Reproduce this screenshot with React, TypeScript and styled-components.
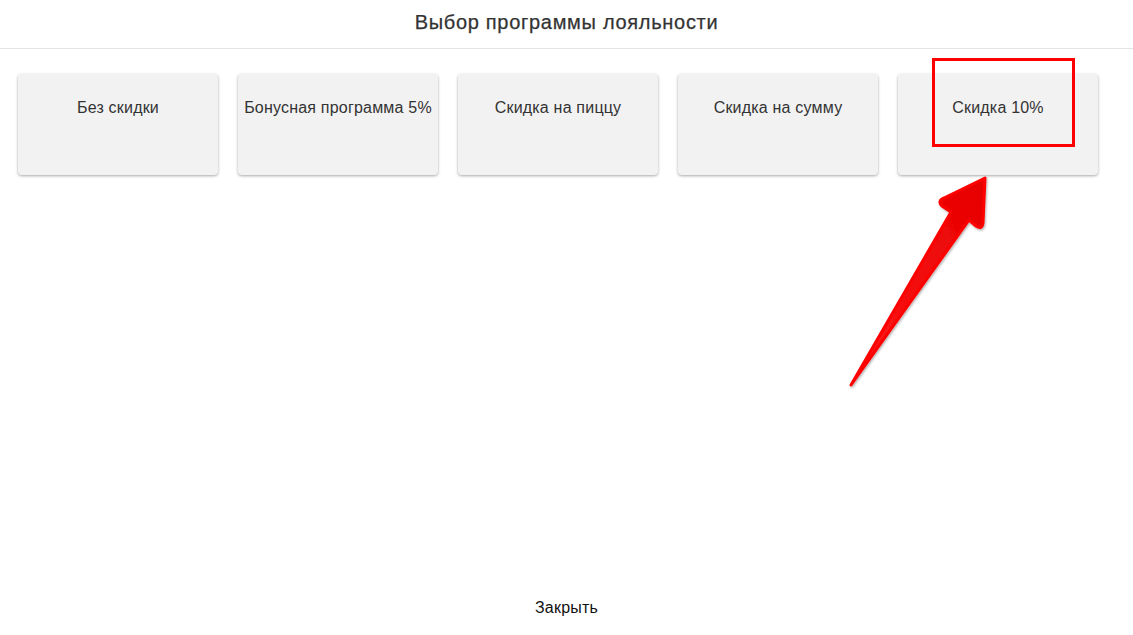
import React from 'react';
import styled, { createGlobalStyle } from 'styled-components';

const GlobalStyle = createGlobalStyle`
  html, body {
    margin: 0;
    padding: 0;
    background: #fff;
    font-family: "Liberation Sans", Arial, sans-serif;
  }
`;

const Page = styled.div`
  position: relative;
  height: 100vh;
  display: flex;
  flex-direction: column;
  overflow: hidden;
`;

const Header = styled.header`
  height: 49px;
  display: flex;
  align-items: center;
  justify-content: center;
  padding-bottom: 4px;
  box-sizing: border-box;
  border-bottom: 1px solid #e3e3e3;
`;

const Title = styled.h1`
  margin: 0;
  font-size: 20px;
  font-weight: 400;
  letter-spacing: 0.7px;
  color: #333;
  -webkit-text-stroke: 0.25px #333;
`;

const Body = styled.main`
  flex: 1;
  padding: 25px 18px 0;
`;

const CardRow = styled.div`
  display: flex;
  gap: 20px;
`;

const Card = styled.button`
  width: 200px;
  height: 101px;
  padding: 25px 0 0;
  box-sizing: border-box;
  display: flex;
  justify-content: center;
  align-items: flex-start;
  border: none;
  border-radius: 4px;
  background: #f2f2f2;
  box-shadow: 0 1px 3px rgba(0, 0, 0, 0.35);
  font-family: inherit;
  font-size: 16px;
  line-height: 18px;
  letter-spacing: 0.2px;
  color: #333;
  cursor: pointer;
  white-space: nowrap;
`;

const Footer = styled.footer`
  height: 54px;
  display: flex;
  align-items: center;
  justify-content: center;
`;

const CloseButton = styled.button`
  border: none;
  background: transparent;
  font-family: inherit;
  font-size: 16px;
  letter-spacing: 0.2px;
  color: #111;
  cursor: pointer;
`;

// annotation drawn over the screenshot
const Highlight = styled.div`
  position: absolute;
  left: 932px;
  top: 58px;
  width: 143px;
  height: 89px;
  box-sizing: border-box;
  border: 3.5px solid #ff0000;
  pointer-events: none;
`;

const ArrowLayer = styled.svg`
  position: absolute;
  left: 0;
  top: 0;
  pointer-events: none;
`;

const programs = [
  'Без скидки',
  'Бонусная программа 5%',
  'Скидка на пиццу',
  'Скидка на сумму',
  'Скидка 10%',
];

export default function App() {
  return (
    <>
      <GlobalStyle />
      <Page>
        <Header>
          <Title>Выбор программы лояльности</Title>
        </Header>
        <Body>
          <CardRow>
            {programs.map((p) => (
              <Card key={p}>{p}</Card>
            ))}
          </CardRow>
        </Body>
        <Footer>
          <CloseButton>Закрыть</CloseButton>
        </Footer>
        <Highlight />
        <ArrowLayer width="1133" height="635" viewBox="0 0 1133 635">
          <defs>
            <linearGradient id="arrowFill" x1="0" y1="1" x2="1" y2="0">
              <stop offset="0" stopColor="#ff1a1a" />
              <stop offset="1" stopColor="#e60000" />
            </linearGradient>
            <filter id="arrowShadow" x="-20%" y="-20%" width="140%" height="140%">
              <feDropShadow dx="1" dy="1.5" stdDeviation="1.2" floodColor="#000" floodOpacity="0.3" />
            </filter>
          </defs>
          <path
            d="M851 385 L951 212 L942 206 Q937 201 944 198 L985 178 L983 223 Q982 230 976 226 L969 220 Z"
            fill="url(#arrowFill)"
            stroke="#f00"
            strokeWidth="3"
            strokeLinejoin="round"
            filter="url(#arrowShadow)"
          />
        </ArrowLayer>
      </Page>
    </>
  );
}
